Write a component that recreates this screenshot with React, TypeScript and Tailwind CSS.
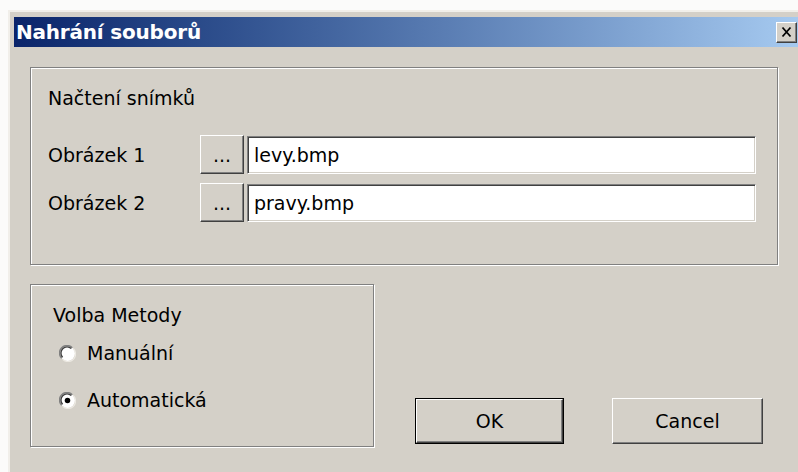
import React from 'react';

const font = { fontFamily: '"DejaVu Sans", "Liberation Sans", sans-serif' };

// klasický vystouplý rámeček tlačítka
const raised =
  'bg-[#d4d0c8] border border-t-white border-l-white border-b-[#404040] border-r-[#404040] shadow-[inset_-1px_-1px_0_#808080]';

// zapuštěné textové pole
const sunken =
  'bg-white border border-t-[#808080] border-l-[#808080] border-b-white border-r-white shadow-[inset_1px_1px_0_#404040,inset_-1px_-1px_0_#d4d0c8]';

// rytý rámeček skupiny
const etched = 'border border-[#808080] shadow-[inset_1px_1px_0_#ffffff,1px_1px_0_#ffffff]';

const Radio: React.FC<{ checked?: boolean; label: string }> = ({ checked, label }) => (
  <div className="flex items-center gap-[11px] h-[22px]">
    <svg width="17" height="17" viewBox="0 0 16 16">
      <circle cx="8" cy="8" r="7" fill="#ffffff" />
      <path d="M2.5 12.5 A7 7 0 0 1 12.5 2.5" fill="none" stroke="#808080" strokeWidth="1.3" />
      <path d="M3.4 11.6 A5.8 5.8 0 0 1 11.6 3.4" fill="none" stroke="#404040" strokeWidth="1.3" />
      <path d="M13.5 3.5 A7 7 0 0 1 3.5 13.5" fill="none" stroke="#ece9e2" strokeWidth="1.2" />
      {checked && <circle cx="8" cy="8" r="2.6" fill="#000000" />}
    </svg>
    <span>{label}</span>
  </div>
);

const FileRow: React.FC<{ label: string; value: string }> = ({ label, value }) => (
  <div className="flex items-center">
    <span className="w-[152px]">{label}</span>
    <button className={`${raised} w-[44px] h-[39px] flex items-end justify-center pb-[8px] leading-none`}>...</button>
    <div className={`${sunken} ml-[3px] w-[509px] h-[38px] flex items-center pl-[6px]`}>{value}</div>
  </div>
);

export default function App() {
  return (
    <div className="w-[798px] h-[472px] overflow-hidden bg-[#fbfbfa] pt-[10px] pl-[8px]" style={font}>
      <div className="h-full bg-[#d4d0c8] border-t-2 border-l-2 border-t-[#f1efea] border-l-[#f1efea] pt-[5px] pl-[4px] text-[19px] leading-[22px] text-black">
        {/* titulkový pruh */}
        <div className="h-[30px] flex items-center justify-between bg-gradient-to-r from-[#0a246a] to-[#a6caf0] pl-[2px] pr-[1px]">
          <span className="text-white font-bold text-[20px] tracking-[-0.2px]">Nahrání souborů</span>
          <button className={`${raised} w-[21px] h-[21px] flex items-center justify-center`}>
            <svg width="13" height="12" viewBox="0 0 13 12">
              <path d="M2.5 1.5 L10.5 10.5 M10.5 1.5 L2.5 10.5" stroke="#000" strokeWidth="1.8" />
            </svg>
          </button>
        </div>

        <div className="pl-[16px] pt-[20px]">
          <div className={`${etched} w-[748px] h-[198px] pl-[17px] pt-[19px]`}>
            <div>Načtení snímků</div>
            <div className="mt-[26px] flex flex-col gap-[9px]">
              <FileRow label="Obrázek 1" value="levy.bmp" />
              <FileRow label="Obrázek 2" value="pravy.bmp" />
            </div>
          </div>

          <div className="mt-[19px] flex items-end">
            <div className={`${etched} w-[344px] h-[163px] pl-[22px] pt-[19px]`}>
              <div>Volba Metody</div>
              <div className="mt-[16px] flex flex-col gap-[25px] pl-[6px]">
                <Radio label="Manuální" />
                <Radio checked label="Automatická" />
              </div>
            </div>

            <div className="flex gap-[48px] ml-[41px] mb-[3px]">
              <div className="border border-black">
                <button className={`${raised} w-[147px] h-[44px]`}>OK</button>
              </div>
              <button className={`${raised} w-[151px] h-[46px]`}>Cancel</button>
            </div>
          </div>
        </div>
      </div>
    </div>
  );
}
